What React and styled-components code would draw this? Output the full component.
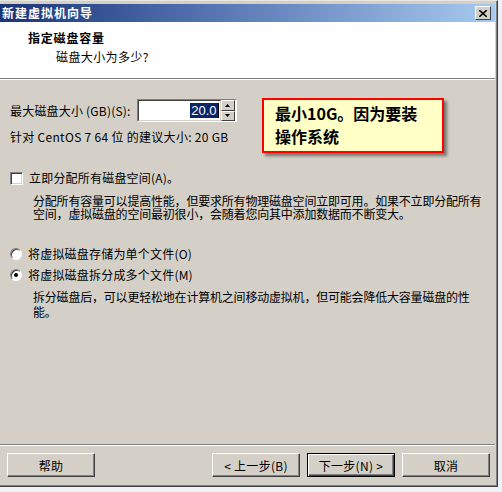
import React from 'react';
import styled, { createGlobalStyle } from 'styled-components';

const GlobalStyle = createGlobalStyle`
  html, body {
    margin: 0;
    padding: 0;
    background: #eef2f8;
  }
  body {
    font-family: "Noto Sans CJK SC", "Liberation Sans", sans-serif;
    font-size: 12px;
    color: #000;
  }
`;

const Window = styled.div`
  position: relative;
  width: 498px;
  height: 487px;
  box-sizing: border-box;
  padding-top: 3px;
  background: #d4d0c8;
  border-top: 1px solid #e8e6e0;
  border-right: 1px solid #404040;
  border-bottom: 1px solid #404040;
  box-shadow: inset -1px -1px 0 #808080;
  display: flex;
  flex-direction: column;
`;

const TitleBar = styled.div`
  height: 18px;
  margin-right: 2px;
  display: flex;
  align-items: center;
  justify-content: space-between;
  padding: 0 4px 0 2px;
  background: linear-gradient(to right, #1a3476 0%, #4a6aa8 35%, #a6caf0 100%);
`;

const Title = styled.span`
  color: #fff;
  font-weight: bold;
  font-size: 12px;
  letter-spacing: 1px;
  line-height: 18px;
`;

const CloseButton = styled.div`
  width: 14px;
  height: 12px;
  background: #d4d0c8;
  border: 1px solid;
  border-color: #fff #404040 #404040 #fff;
  display: flex;
  align-items: center;
  justify-content: center;
`;

const Header = styled.div`
  height: 57px;
  margin-right: 2px;
  box-sizing: border-box;
  background: #fff;
  padding: 8px 0 0 28px;
  border-bottom: 1px solid #808080;
  box-shadow: 0 1px 0 #fff;
`;

const Heading = styled.div`
  font-weight: bold;
  font-size: 12px;
  line-height: 16px;
  letter-spacing: 0.8px;
`;

const SubHeading = styled.div`
  margin-top: 3px;
  padding-left: 28px;
  line-height: 16px;
  letter-spacing: 0.4px;
`;

const Body = styled.div`
  flex: 1;
  padding: 20px 0 0 10px;
  display: flex;
  flex-direction: column;
`;

const SizeRow = styled.div`
  display: flex;
  align-items: center;
  height: 23px;
  gap: 4px;
`;

const Label = styled.span`
  line-height: 14px;
  white-space: nowrap;
  letter-spacing: 0.2px;
`;

const SpinBox = styled.div`
  display: flex;
  height: 23px;
  box-sizing: border-box;
  border: 1px solid;
  border-color: #808080 #fff #fff #808080;
  margin-left: 2px;
`;

const SpinField = styled.div`
  width: 80px;
  background: #fff;
  border: 1px solid;
  border-color: #404040 #d4d0c8 #d4d0c8 #404040;
  display: flex;
  align-items: center;
  justify-content: flex-end;
  padding-right: 1px;
`;

const Selected = styled.span`
  background: #0a246a;
  color: #fff;
  font-family: "Liberation Sans", sans-serif;
  font-size: 13px;
  line-height: 15px;
  padding: 0 1px;
`;

const Caret = styled.span`
  width: 1px;
  height: 15px;
  background: #000;
`;

const SpinButtons = styled.div`
  display: flex;
  flex-direction: column;
  background: #fff;
  padding: 0 1px 0 0;
`;

const SpinButton = styled.div`
  width: 14px;
  flex: 1;
  box-sizing: border-box;
  background: #d4d0c8;
  border: 1px solid;
  border-color: #fff #404040 #404040 #fff;
  display: flex;
  align-items: center;
  justify-content: center;
`;

const Hint = styled.div`
  margin-top: 8px;
  line-height: 14px;
  letter-spacing: 0.3px;
`;

const OptionRow = styled.label`
  display: flex;
  align-items: center;
  gap: 6px;
  margin-top: ${({ $top }) => $top}px;
  height: 14px;
`;

const CheckBox = styled.span`
  width: 13px;
  height: 13px;
  box-sizing: border-box;
  background: #fff;
  border: 1px solid;
  border-color: #808080 #fff #fff #808080;
  box-shadow: inset 1px 1px 0 #404040, inset -1px -1px 0 #d4d0c8;
`;

const Radio = styled.span`
  width: 12px;
  height: 12px;
  box-sizing: border-box;
  border-radius: 50%;
  background: #fff;
  border: 1px solid;
  border-color: #808080 #fff #fff #808080;
  box-shadow: inset 1px 1px 0 #404040;
  display: flex;
  align-items: center;
  justify-content: center;
  &::after {
    content: '';
    width: 4px;
    height: 4px;
    border-radius: 50%;
    background: ${({ $checked }) => ($checked ? '#000' : 'transparent')};
  }
`;

const Description = styled.div`
  margin-top: ${({ $top }) => $top}px;
  padding-left: 23px;
  line-height: ${({ $lh }) => $lh}px;
  letter-spacing: -0.2px;
  white-space: nowrap;
`;

const Footer = styled.div`
  height: 42px;
  margin-right: 2px;
  border-top: 1px solid #808080;
  box-shadow: inset 0 1px 0 #fff;
  display: flex;
  align-items: flex-start;
  padding: 8px 0 0 7px;
  box-sizing: border-box;
`;

const Button = styled.div`
  width: 88px;
  height: 24px;
  box-sizing: border-box;
  display: flex;
  align-items: center;
  justify-content: center;
  margin-left: ${({ $gap }) => $gap || 0}px;
  background: #d4d0c8;
  border: 1px solid;
  border-color: ${({ $default }) => ($default ? '#000' : '#fff #404040 #404040 #fff')};
  box-shadow: ${({ $default }) =>
    $default
      ? 'inset 1px 1px 0 #fff, inset -1px -1px 0 #404040, inset -2px -2px 0 #808080'
      : 'inset -1px -1px 0 #808080'};
  letter-spacing: 0.3px;
`;

const Callout = styled.div`
  position: absolute;
  left: 262px;
  top: 97px;
  width: 182px;
  height: 55px;
  box-sizing: border-box;
  background: #ffffc6;
  border: 2px solid #ff0000;
  box-shadow: 3px 3px 3px rgba(0, 0, 0, 0.45);
  padding: 2px 0 0 11px;
  font-weight: bold;
  font-size: 16px;
  line-height: 23px;
`;

export default function App() {
  return (
    <>
      <GlobalStyle />
      <Window>
        <TitleBar>
          <Title>新建虚拟机向导</Title>
          <CloseButton>
            <svg width="8" height="7" viewBox="0 0 8 7">
              <path d="M0 0 L8 7 M8 0 L0 7" stroke="#000" strokeWidth="1.6" />
            </svg>
          </CloseButton>
        </TitleBar>
        <Header>
          <Heading>指定磁盘容量</Heading>
          <SubHeading>磁盘大小为多少?</SubHeading>
        </Header>
        <Body>
          <SizeRow>
            <Label>最大磁盘大小 (GB)(S):</Label>
            <SpinBox>
              <SpinField>
                <Selected>20.0</Selected>
                <Caret />
              </SpinField>
              <SpinButtons>
                <SpinButton>
                  <svg width="5" height="3" viewBox="0 0 5 3"><path d="M2.5 0 L5 3 L0 3 Z" fill="#000" /></svg>
                </SpinButton>
                <SpinButton>
                  <svg width="5" height="3" viewBox="0 0 5 3"><path d="M0 0 L5 0 L2.5 3 Z" fill="#000" /></svg>
                </SpinButton>
              </SpinButtons>
            </SpinBox>
          </SizeRow>
          <Hint>针对 CentOS 7 64 位 的建议大小: 20 GB</Hint>

          <OptionRow $top={27}>
            <CheckBox />
            <Label>立即分配所有磁盘空间(A)。</Label>
          </OptionRow>
          <Description $top={9} $lh={13}>
            分配所有容量可以提高性能，但要求所有物理磁盘空间立即可用。如果不立即分配所有
            <br />
            空间，虚拟磁盘的空间最初很小，会随着您向其中添加数据而不断变大。
          </Description>

          <OptionRow $top={27}>
            <Radio />
            <Label>将虚拟磁盘存储为单个文件(O)</Label>
          </OptionRow>
          <OptionRow $top={7}>
            <Radio $checked />
            <Label>将虚拟磁盘拆分成多个文件(M)</Label>
          </OptionRow>
          <Description $top={7} $lh={15}>
            拆分磁盘后，可以更轻松地在计算机之间移动虚拟机，但可能会降低大容量磁盘的性
            <br />
            能。
          </Description>
        </Body>
        <Footer>
          <Button>帮助</Button>
          <Button $gap={117}>&lt; 上一步(B)</Button>
          <Button $gap={7} $default>下一步(N) &gt;</Button>
          <Button $gap={7}>取消</Button>
        </Footer>
        <Callout>
          最小10G。因为要装
          <br />
          操作系统
        </Callout>
      </Window>
    </>
  );
}
